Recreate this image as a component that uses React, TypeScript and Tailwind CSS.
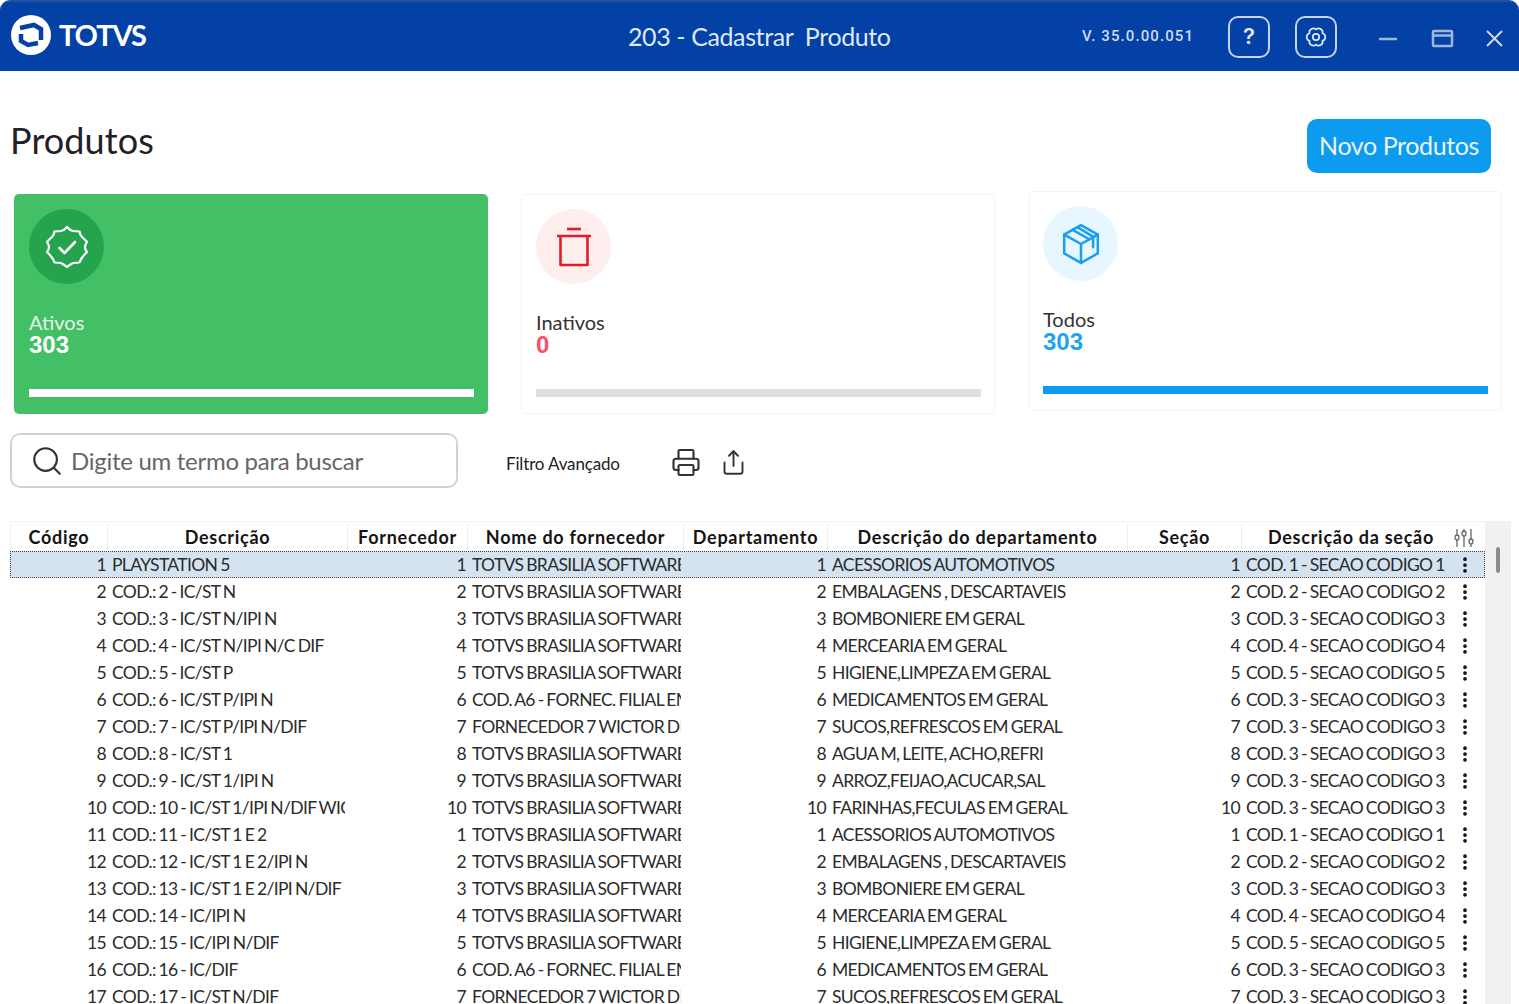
import { EllipsisVertical, Printer, Search, Share } from "lucide-react";
import type { ReactNode } from "react";

const fornecedores: Record<number, string> = {
  6: "COD. A6 - FORNEC. FILIAL EM BRASILIA",
  7: "FORNECEDOR 7 WICTOR DE SOUZA",
};
const departamentos = [
  "ACESSORIOS AUTOMOTIVOS",
  "EMBALAGENS , DESCARTAVEIS",
  "BOMBONIERE EM GERAL",
  "MERCEARIA EM GERAL",
  "HIGIENE,LIMPEZA EM GERAL",
  "MEDICAMENTOS EM GERAL",
  "SUCOS,REFRESCOS EM GERAL",
  "AGUA M, LEITE, ACHO,REFRI",
  "ARROZ,FEIJAO,ACUCAR,SAL",
  "FARINHAS,FECULAS EM GERAL",
];
const descricoes = [
  "PLAYSTATION 5",
  "COD.: 2 - IC/ST N",
  "COD.: 3 - IC/ST N/IPI N",
  "COD.: 4 - IC/ST N/IPI N/C DIF",
  "COD.: 5 - IC/ST P",
  "COD.: 6 - IC/ST P/IPI N",
  "COD.: 7 - IC/ST P/IPI N/DIF",
  "COD.: 8 - IC/ST 1",
  "COD.: 9 - IC/ST 1/IPI N",
  "COD.: 10 - IC/ST 1/IPI N/DIF WICTOR",
  "COD.: 11 - IC/ST 1 E 2",
  "COD.: 12 - IC/ST 1 E 2/IPI N",
  "COD.: 13 - IC/ST 1 E 2/IPI N/DIF",
  "COD.: 14 - IC/IPI N",
  "COD.: 15 - IC/IPI N/DIF",
  "COD.: 16 - IC/DIF",
  "COD.: 17 - IC/ST N/DIF",
];

const rows = descricoes.map((descricao, i) => {
  const id = (i % 10) + 1;
  const secao = i < 5 || (i >= 10 && i < 15) ? id : 3;
  return {
    codigo: i + 1,
    descricao,
    fornecedor: id,
    nome: fornecedores[id] ?? "TOTVS BRASILIA SOFTWARE LTDA",
    departamento: id,
    nomeDepartamento: departamentos[i % 10],
    secao: id,
    nomeSecao: `COD. ${secao} - SECAO CODIGO ${secao}`,
  };
});

const grid = "grid grid-cols-[97px_240px_120px_216px_144px_300px_114px_210px_33px]";
const num = "pr-px text-right";
const txt = "mr-[2px] overflow-hidden whitespace-nowrap pl-[5px]";

const Th = ({ children }: { children?: ReactNode }) => (
  <div className="flex items-center justify-center border-l border-[#efefef] whitespace-nowrap">{children}</div>
);

const Logo = () => (
  <svg viewBox="0 0 40 40" className="h-10 w-10">
    <circle cx="20" cy="20" r="20" fill="#fff" />
    <path d="M9 13 L23 10 L30 14 V25" fill="none" stroke="#0341a6" strokeWidth="4.500" />
    <path d="M10 19 V26 L17 30 L27 28" fill="none" stroke="#0341a6" strokeWidth="4.500" />
  </svg>
);

const Gear = () => (
  <svg viewBox="0 0 24 24" fill="none" stroke="currentColor" strokeWidth="1.700" className="h-6 w-6">
    <path d="M12 4.400 A4 4 0 0 1 18.580 8.200 A4 4 0 0 1 18.580 15.800 A4 4 0 0 1 12 19.600 A4 4 0 0 1 5.420 15.800 A4 4 0 0 1 5.420 8.200 A4 4 0 0 1 12 4.400 Z" />
    <circle cx="12" cy="12" r="3.200" />
  </svg>
);

const Sliders = () => (
  <svg viewBox="0 0 20 20" fill="none" stroke="#666" strokeWidth="1.300" className="h-5 w-5">
    <path d="M3 1 V7 M3 12 V19 M10 1 V3 M10 8 V19 M17 1 V11 M17 16 V19" />
    <ellipse cx="3" cy="9.500" rx="2" ry="2.500" />
    <ellipse cx="10" cy="5.500" rx="2" ry="2.500" />
    <ellipse cx="17" cy="13.500" rx="2" ry="2.500" />
  </svg>
);

const BadgeIcon = () => (
  <svg viewBox="0 0 44 44" fill="none" stroke="#fff" strokeWidth="2.200" strokeLinecap="round" strokeLinejoin="round" className="h-11 w-11">
    <path d="M22 2 Q25 5.500 28 6 Q32 6 34.500 6.500 Q35 10 37 12 Q40 14.500 42 17 Q40 20 40 22 Q40 25 42 27 Q39.500 29.500 37.500 32 Q35.500 34.500 34.500 37.500 Q31 37.500 28 38 Q25 39.500 22 42 Q19 39.500 16 38 Q13 37.500 9.500 37.500 Q8.500 34.500 6.500 32 Q4.500 29.500 2 27 Q4 25 4 22 Q4 20 2 17 Q4 14.500 7 12 Q9 10 9.500 6.500 Q12 6 16 6 Q19 5.500 22 2 Z" />
    <path d="M14.500 23 L19.500 28 L30 17" strokeWidth="2.600" />
  </svg>
);

const TrashIcon = () => (
  <svg viewBox="0 0 34 40" fill="none" stroke="#e11d2a" strokeWidth="2.600" className="h-10 w-[34px]">
    <path d="M10 2 H24" />
    <path d="M0 9 H34" />
    <path d="M3.500 9 V38 H30.500 V9" strokeLinejoin="round" />
  </svg>
);

const BoxIcon = () => (
  <svg viewBox="0 0 36 40" fill="none" stroke="#18a0ee" strokeWidth="2.400" strokeLinejoin="round" strokeLinecap="round" className="h-[42px] w-[38px]">
    <path d="M18 2 L34 11 V29 L18 38 L2 29 V11 Z" />
    <path d="M2 11 L18 20 L34 11" />
    <path d="M18 20 V38" />
    <path d="M10 6.500 L26 15.500" />
    <path d="M14.500 4 L29.500 13 V23" />
  </svg>
);

const Card = ({
  icon,
  iconBg,
  label,
  value,
  className,
  labelColor,
  valueColor,
  barColor,
}: {
  icon: ReactNode;
  iconBg: string;
  label: string;
  value: string;
  className: string;
  labelColor: string;
  valueColor: string;
  barColor: string;
}) => (
  <div className={`flex h-[220px] flex-col rounded-[5px] pt-[15px] ${className}`}>
    <div className={`flex h-[75px] w-[75px] items-center justify-center rounded-full ${iconBg}`}>{icon}</div>
    <div className={`mt-[26px] text-[20px] leading-[24px] ${labelColor}`}>{label}</div>
    <div className={`text-[24px] leading-[21px] font-bold font-['Liberation_Sans',sans-serif] ${valueColor}`}>{value}</div>
    <div className={`mt-[34px] h-2 w-full ${barColor}`} />
  </div>
);

export default function App() {
  return (
    <div className="flex h-[1004px] flex-col overflow-hidden bg-white font-['Lato',sans-serif] text-[#222]">
      <header className="flex h-[71px] shrink-0 items-center rounded-t-[10px] border-t-2 border-[#23519f] bg-[#0341a6] pl-[11px] text-[#dfe8f6]">
        <div className="mb-[4px] flex items-center">
          <Logo />
          <span className="ml-2 w-[88px] text-[29px] leading-none font-bold tracking-[-1.1px] text-white">TOTVS</span>
        </div>
        <div className="ml-[481px] w-[454px] whitespace-pre text-[25px] tracking-[-0.4px]">203 - Cadastrar  Produto</div>
        <span className="w-[146px] font-['Roboto',sans-serif] text-[15px] font-medium tracking-[1.1px] text-[#cfdcf1]">V. 35.0.00.051</span>
        <button className="flex h-[42px] w-[42px] items-center justify-center rounded-[10px] border-2 border-[#c6d3ea] font-['Inter',sans-serif] text-[22px] font-semibold">?</button>
        <button className="ml-[25px] flex h-[42px] w-[42px] items-center justify-center rounded-[10px] border-2 border-[#c6d3ea]">
          <Gear />
        </button>
        <svg viewBox="0 0 130 24" fill="none" stroke="#9fb6db" strokeWidth="2.500" className="ml-[42px] h-6 w-[130px]">
          <path d="M0 14 H18" />
          <rect x="54" y="6" width="19" height="15" rx="1" />
          <path d="M54 10.500 H73" />
          <path d="M108 6 L123 21 M123 6 L108 21" stroke="#cbd8ed" strokeWidth="2" />
        </svg>
      </header>

      <div className="flex h-[120px] shrink-0 pl-[10px] pr-7">
        <h1 className="mt-[47px] text-[36px] leading-[44px] tracking-[0.1px] text-[#1f2125]">Produtos</h1>
        <button className="mt-[48px] ml-auto h-[54px] w-[184px] rounded-[10px] bg-[#0c9bee] text-[25px] tracking-[-0.4px] text-[#e9f6fe]">Novo Produtos</button>
      </div>

      <div className="flex h-[223px] shrink-0 pl-[14px]">
        <Card
          icon={<BadgeIcon />}
          iconBg="bg-[#26a44d]"
          label="Ativos"
          value="303"
          className="mt-[3px] w-[474px] bg-[#43bf66] pr-[14px] pl-[15px]"
          labelColor="text-[#e4f7e9]"
          valueColor="text-white"
          barColor="bg-white"
        />
        <Card
          icon={<TrashIcon />}
          iconBg="bg-[#feeeee]"
          label="Inativos"
          value="0"
          className="mt-[3px] ml-[33px] w-[474px] bg-white pr-[14px] pl-[15px] ring-1 ring-inset ring-[#f3f3f3]"
          labelColor="text-[#333]"
          valueColor="text-[#fb4f66]"
          barColor="bg-[#dfdfdf]"
        />
        <Card
          icon={<BoxIcon />}
          iconBg="bg-[#e8f7ff]"
          label="Todos"
          value="303"
          className="ml-[34px] w-[473px] bg-white pr-[14px] pl-[14px] ring-1 ring-inset ring-[#f3f3f3]"
          labelColor="text-[#333]"
          valueColor="text-[#1ea5f0]"
          barColor="bg-[#0c9bee]"
        />
      </div>

      <div className="mt-[19px] flex h-[55px] shrink-0 items-center pl-[10px]">
        <div className="flex h-[55px] w-[448px] items-center rounded-[10px] border-2 border-[#d2d2d2] pl-[18px]">
          <Search className="h-[34px] w-[34px] text-[#333]" strokeWidth={1.5} />
          <span className="ml-[7px] text-[24px] tracking-[-0.28px] text-[#666]">Digite um termo para buscar</span>
        </div>
        <span className="mt-[6px] ml-[48px] text-[17px] tracking-[-0.15px] text-[#222]">Filtro Avançado</span>
        <Printer className="mt-[4px] ml-[51px] h-[31px] w-[30px] text-[#333]" strokeWidth={1.7} />
        <Share className="mt-[4px] ml-[19px] h-[27px] w-[27px] text-[#333]" strokeWidth={1.7} />
      </div>

      <div className="mt-[33px] flex min-h-0 flex-1 pl-[10px]">
        <div className="w-[1475px] overflow-hidden text-[17.5px] tracking-[-0.65px] text-[#2b2b2b] [word-spacing:-1px]">
          <div className={`${grid} h-[30px] border-t border-[#f2f2f2] pt-[2px] text-[18px] font-bold tracking-[0.72px] text-[#141414] [word-spacing:0px]`}>
            <Th>Código</Th>
            <Th>Descrição</Th>
            <Th>Fornecedor</Th>
            <Th>Nome do fornecedor</Th>
            <Th>Departamento</Th>
            <Th>Descrição do departamento</Th>
            <Th>Seção</Th>
            <div className="flex items-center justify-center border-l border-[#efefef] pl-[9px]">Descrição da seção</div>
            <div className="flex items-center justify-center pr-[8px]">
              <Sliders />
            </div>
          </div>
          {rows.map((r, i) => (
            <div
              key={r.codigo}
              className={`${grid} h-[27px] items-center leading-[27px] ${i === 0 ? "bg-[#d5e3f1] outline outline-dotted -outline-offset-1 outline-[#444]" : ""}`}
            >
              <div className={num}>{r.codigo}</div>
              <div className={txt}>{r.descricao}</div>
              <div className={num}>{r.fornecedor}</div>
              <div className={txt}>{r.nome}</div>
              <div className={num}>{r.departamento}</div>
              <div className={txt}>{r.nomeDepartamento}</div>
              <div className={num}>{r.secao}</div>
              <div className={txt}>{r.nomeSecao}</div>
              <div className="flex justify-center pr-[6px]">
                <EllipsisVertical className="h-5 w-5 text-[#111]" strokeWidth={2.5} />
              </div>
            </div>
          ))}
        </div>
        <div className="w-[26px] bg-[#f1f1f1] pt-[26px] pl-[11px]">
          <div className="h-[26px] w-[4px] rounded-sm bg-[#8c8c8c]" />
        </div>
      </div>
    </div>
  );
}
